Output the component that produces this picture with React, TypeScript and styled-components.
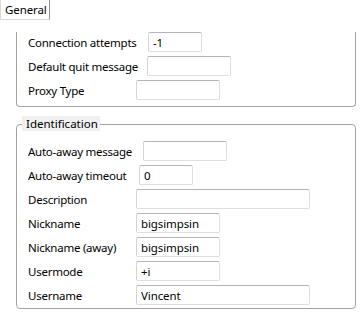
import React from 'react';
import styled, { createGlobalStyle } from 'styled-components';

const Global = createGlobalStyle`
    html, body {
        margin: 0;
        background: #fff;
    }
    body {
        font-family: "Noto Sans", "Liberation Sans", sans-serif;
        font-size: 11.5px;
        letter-spacing: -0.25px;
        color: #000;
    }
`;

const Page = styled.div`
    width: 361px;
    height: 314px;
    overflow: hidden;
`;

const TabBar = styled.div`
    display: flex;
    height: 20px;
`;

const Tab = styled.div`
    box-sizing: border-box;
    width: 50px;
    height: 20px;
    padding: 2px 0 0 4px;
    border-left: 1px solid #dadada;
    border-bottom: 1px solid #dadada;
    border-right: 1px solid #8e8f8f;
    line-height: 15px;
    letter-spacing: -0.1px;
`;

const Group = styled.div<{ $clipped?: boolean }>`
    position: relative;
    box-sizing: border-box;
    width: 340px;
    margin-left: 16px;
    border: 1px solid #a3a3a3;
    border-radius: 4px;
    ${p => p.$clipped && `
        border-top: none;
        border-top-left-radius: 0;
        border-top-right-radius: 0;
    `}
`;

const Title = styled.div`
    position: absolute;
    top: -9px;
    left: 5px;
    padding: 0 2px 0 4px;
    line-height: 15px;
    letter-spacing: 0;
    background: #f0f0f0;
`;

const Rows = styled.div<{ $top: number; $bottom: number }>`
    display: grid;
    grid-template-columns: 108px 1fr;
    grid-auto-rows: 20px;
    row-gap: 4px;
    align-items: center;
    padding: ${p => p.$top}px 0 ${p => p.$bottom}px 11px;
`;

const Label = styled.span`
    white-space: nowrap;
`;

const Field = styled.input<{ $w: number; $shift: number }>`
    box-sizing: border-box;
    width: ${p => p.$w}px;
    height: 20px;
    margin: 0 0 0 ${p => p.$shift}px;
    padding: 0 4px;
    border: 1px solid #dcdfe3;
    border-top-color: #b3b5b9;
    border-left-color: #d2d4d8;
    border-radius: 2px;
    font: inherit;
    letter-spacing: -0.1px;
    color: #000;
    outline: none;
`;

interface Row {
    label: string;
    value?: string;
    w: number;
    shift: number;
}

const general: Row[] = [
    { label: 'Connection attempts', value: '-1', w: 54, shift: 12 },
    { label: 'Default quit message', w: 84, shift: 11 },
    { label: 'Proxy Type', w: 84, shift: 0 },
];

const identification: Row[] = [
    { label: 'Auto-away message', w: 84, shift: 7 },
    { label: 'Auto-away timeout', value: '0', w: 54, shift: 3 },
    { label: 'Description', w: 174, shift: 0 },
    { label: 'Nickname', value: 'bigsimpsin', w: 84, shift: 0 },
    { label: 'Nickname (away)', value: 'bigsimpsin', w: 84, shift: 0 },
    { label: 'Usermode', value: '+i', w: 84, shift: 0 },
    { label: 'Username', value: 'Vincent', w: 174, shift: 0 },
];

function FormRows(props: { rows: Row[]; top: number; bottom: number }) {
    return <Rows $top={props.top} $bottom={props.bottom}>
        {props.rows.map(r => <React.Fragment key={r.label}>
            <Label>{r.label}</Label>
            <Field readOnly value={r.value ?? ''} $w={r.w} $shift={r.shift} />
        </React.Fragment>)}
    </Rows>;
}

const Spacer = styled.div<{ $h: number }>`
    height: ${p => p.$h}px;
`;

export default function App() {
    return <Page>
        <Global />
        <TabBar>
            <Tab>General</Tab>
        </TabBar>
        <Spacer $h={12} />
        <Group $clipped>
            <FormRows rows={general} top={0} bottom={6} />
        </Group>
        <Spacer $h={17} />
        <Group>
            <Title>Identification</Title>
            <FormRows rows={identification} top={16} bottom={3} />
        </Group>
    </Page>;
}
